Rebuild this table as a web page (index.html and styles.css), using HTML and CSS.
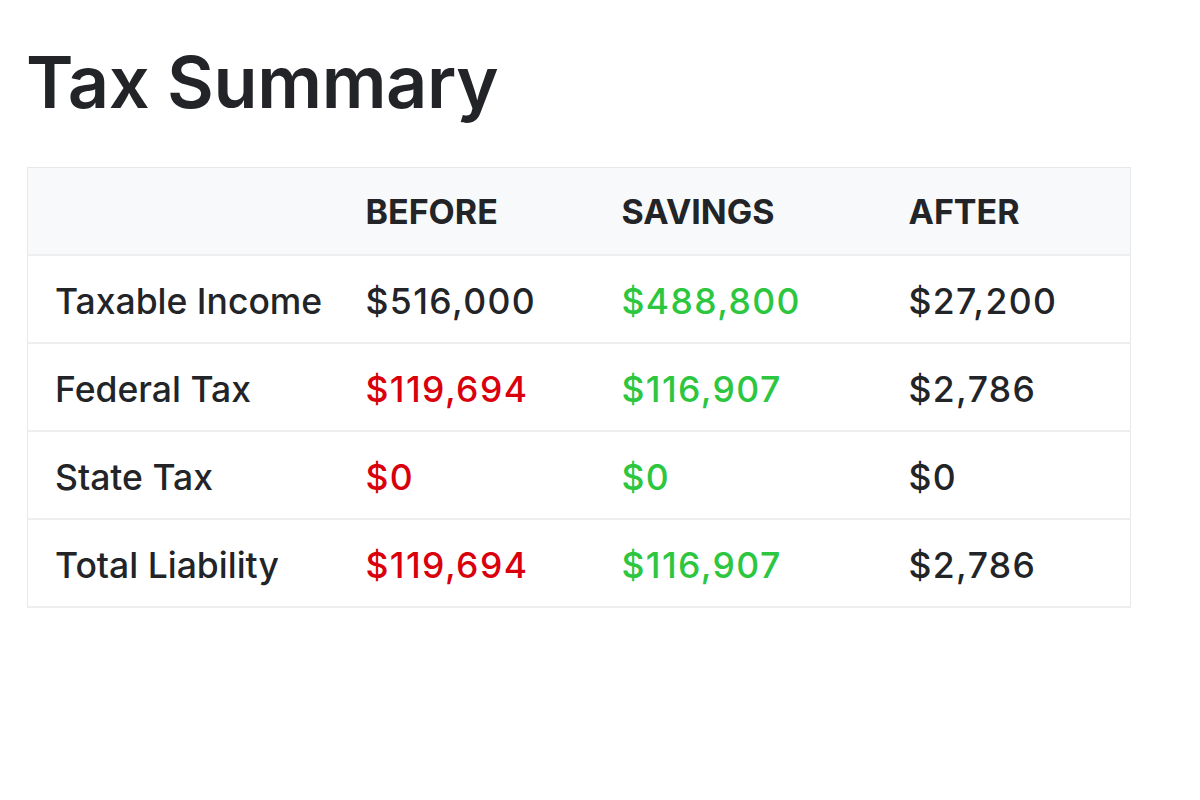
FILE: index.html
```html
<!DOCTYPE html>
<html lang="en">
<head>
<meta charset="utf-8">
<title>Tax Summary</title>
<link rel="stylesheet" href="styles.css">
</head>
<body>
<main class="page">
  <h1 class="title">Tax Summary</h1>
  <table class="summary">
    <colgroup>
      <col class="col-label">
      <col class="col-before">
      <col class="col-savings">
      <col class="col-after">
    </colgroup>
    <thead>
      <tr>
        <th></th>
        <th>BEFORE</th>
        <th>SAVINGS</th>
        <th>AFTER</th>
      </tr>
    </thead>
    <tbody>
      <tr>
        <td>Taxable Income</td>
        <td class="num">$516,000</td>
        <td class="num pos">$488,800</td>
        <td class="num">$27,200</td>
      </tr>
      <tr>
        <td>Federal Tax</td>
        <td class="num neg">$119,694</td>
        <td class="num pos">$116,907</td>
        <td class="num">$2,786</td>
      </tr>
      <tr>
        <td>State Tax</td>
        <td class="num neg">$0</td>
        <td class="num pos">$0</td>
        <td class="num">$0</td>
      </tr>
      <tr>
        <td>Total Liability</td>
        <td class="num neg">$119,694</td>
        <td class="num pos">$116,907</td>
        <td class="num">$2,786</td>
      </tr>
    </tbody>
  </table>
</main>
</body>
</html>
```
FILE: styles.css
```css
html, body {
  margin: 0;
  padding: 0;
  background: #ffffff;
}
body {
  font-family: Inter, "Noto Sans", "DejaVu Sans", sans-serif;
  color: #222427;
}
.page {
  padding: 42px 70px 0 26px;
}
.title {
  margin: 0 0 45px 0;
  font-size: 72px;
  font-weight: 600;
  line-height: 80px;
  letter-spacing: -0.4px;
}
.summary {
  width: 1104px;
  table-layout: fixed;
  border-collapse: collapse;
  border: 1px solid #e6e8ea;
  margin-left: 1px;
}
.col-label { width: 310px; }
.col-before { width: 256px; }
.col-savings { width: 287px; }
.col-after { width: auto; }
.summary th,
.summary td {
  text-align: left;
  padding: 0 12px 0 28px;
  height: 86px;
  white-space: nowrap;
  border-bottom: 2px solid #eceef0;
}
.summary tbody td {
  font-size: 35.5px;
  font-weight: 500;
  padding-top: 4px;
  height: 82px;
}
.summary tbody td:first-child {
  padding-left: 27px;
}
.summary thead th {
  background: #f8f9fa;
  font-size: 34px;
  font-weight: 700;
}
.num {
  letter-spacing: 1.4px;
}
.pos {
  color: #2cc63f;
}
.neg {
  color: #d9000c;
}
```
